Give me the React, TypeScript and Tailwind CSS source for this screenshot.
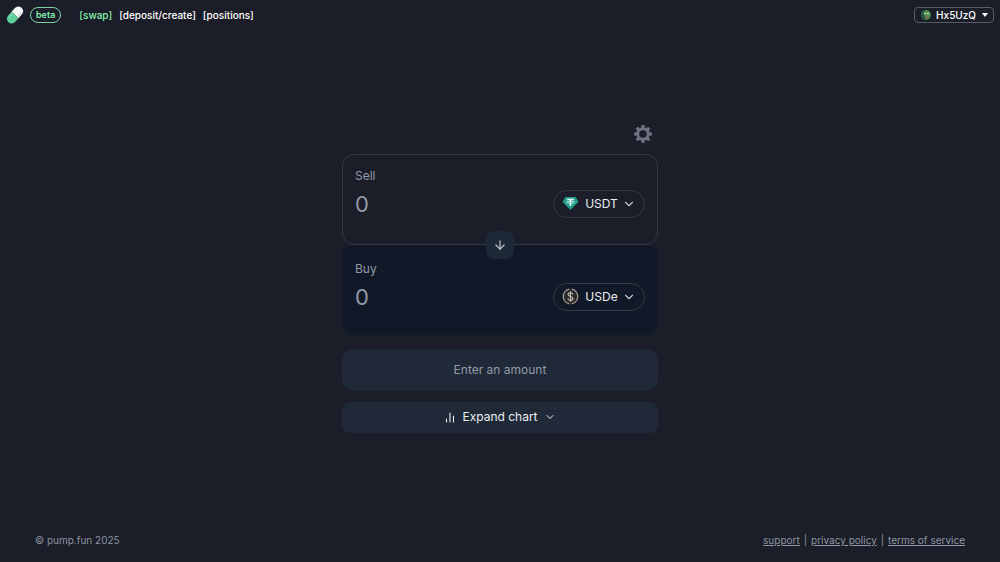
import React, { useState } from 'react';
import { ArrowDown, ChevronDown } from 'lucide-react';

function PillLogo() {
  return (
    <svg viewBox="0 0 20 20" className="w-5 h-5" aria-hidden="true">
      <g transform="rotate(42 10 10)">
        <path d="M5.3 10V4.9a4.7 4.7 0 0 1 9.4 0V10z" fill="#f4f7f6" />
        <path d="M5.3 10v5.1a4.7 4.7 0 0 0 9.4 0V10z" fill="#5fcf9a" />
        <path d="M12.8 5v3.2" stroke="#c9d6d2" strokeWidth="1" strokeLinecap="round" />
        <path d="M7.2 11.5v3" stroke="#a5ecc6" strokeWidth="1" strokeLinecap="round" />
      </g>
    </svg>
  );
}

function GearIcon() {
  return (
    <svg viewBox="0 0 20 20" className="w-5 h-5" aria-hidden="true">
      <circle cx="10" cy="10" r="5.2" fill="none" stroke="currentColor" strokeWidth="2.9" />
      {[0, 45, 90, 135, 180, 225, 270, 315].map((angle) => (
        <path key={angle} d="M8.1 4.6 8.5 1.1h3l.4 3.5z" fill="currentColor" transform={`rotate(${angle} 10 10)`} />
      ))}
    </svg>
  );
}

function TetherIcon() {
  return (
    <svg viewBox="0 0 18 18" className="w-[17px] h-[17px]" aria-hidden="true">
      <path d="M4.2 2h9.6a1 1 0 0 1 .9.5l2.4 4.2a1 1 0 0 1-.2 1.2l-7.2 7.3a1 1 0 0 1-1.4 0L1.1 7.9a1 1 0 0 1-.2-1.2l2.4-4.2a1 1 0 0 1 .9-.5z" fill="#1f9e8b" />
      <path d="M5.4 4.7h7.2M9 4.7v7" stroke="#e9f7f4" strokeWidth="1.6" />
      <ellipse cx="9" cy="7.7" rx="4.3" ry="1.1" fill="none" stroke="#e9f7f4" strokeWidth=".8" />
    </svg>
  );
}

function EthenaIcon() {
  return (
    <svg viewBox="0 0 18 18" className="w-[17px] h-[17px]" aria-hidden="true">
      <circle cx="9" cy="9" r="8.5" fill="#29292c" />
      <path d="M7.6 1.2a8 8 0 0 0 0 15.6M10.4 1.2a8 8 0 0 1 0 15.6" fill="none" stroke="#a39c92" strokeWidth="1.4" />
      <path d="M11.7 6.7C11.4 5.6 10.4 5 9 5 7.5 5 6.4 5.7 6.4 6.9c0 2.8 5.3 1.3 5.3 4.1 0 1.3-1.2 2-2.7 2s-2.6-.7-2.8-1.9M9 3.4v11.2" fill="none" stroke="#c9c0b3" strokeWidth="1.2" />
    </svg>
  );
}

function BarsIcon() {
  return (
    <svg viewBox="0 0 12 12" className="w-3 h-3" aria-hidden="true">
      <path d="M2.5 8v3M6 2v9M9.5 5v6" fill="none" stroke="currentColor" strokeWidth="1.1" strokeLinecap="round" />
    </svg>
  );
}

function Avatar() {
  return (
    <svg viewBox="0 0 12 12" className="w-3 h-3" aria-hidden="true">
      <circle cx="6" cy="6" r="5" fill="#4b8a50" />
      <path d="M1 6a5 5 0 0 1 4-4.9L4.5 6 6 11A5 5 0 0 1 1 6z" fill="#275a45" />
      <circle cx="5" cy="4.5" r="1" fill="#d7dfb4" />
      <circle cx="8" cy="4.5" r="1" fill="#d7dfb4" />
      <path d="M4.5 8h4" stroke="#a5564a" strokeWidth="1" />
    </svg>
  );
}

interface TokenPanelProps {
  id: string;
  label: string;
  token: string;
  icon: React.ReactNode;
  className: string;
}

function TokenPanel({ id, label, token, icon, className }: TokenPanelProps) {
  const [amount, setAmount] = useState('');

  return (
    <section className={`rounded-xl border px-3 ${className}`}>
      <label htmlFor={id} className="block text-xs leading-4 text-[#9299a8]">
        {label}
      </label>
      <div className="mt-1.5 flex items-center justify-between">
        <input
          id={id}
          inputMode="decimal"
          placeholder="0"
          value={amount}
          onChange={(e) => setAmount(e.target.value)}
          className="min-w-0 flex-1 bg-transparent text-[22px] leading-7 text-white placeholder:text-[#9299a8] outline-none"
        />
        <button type="button" className="flex h-7 w-[92px] items-center justify-center rounded-full border border-[#343945] text-xs text-[#eceef2]">
          {icon}
          <span className="ml-1.5 mr-1">{token}</span>
          <ChevronDown className="w-3.5 h-3.5 text-[#c3c7cf]" strokeWidth={2} />
        </button>
      </div>
    </section>
  );
}

export default function App() {
  return (
    <div className="flex min-h-screen flex-col bg-[#1b1d28] font-['Inter',sans-serif] text-white">
      <header className="flex h-[30px] items-center justify-between pl-[5px] pr-1.5">
        <div className="flex items-center">
          <a href="#home" aria-label="Home">
            <PillLogo />
          </a>
          <span className="ml-[5px] flex h-4 items-center rounded-full border border-[#7fcfa2] px-[5px] text-[9px] font-semibold text-[#86efac]">
            beta
          </span>
          <nav className="ml-[18px] flex gap-[7px] text-[10px] font-medium leading-4">
            <a href="#swap" className="text-[#86efac]">[swap]</a>
            <a href="#deposit">[deposit/create]</a>
            <a href="#positions">[positions]</a>
          </nav>
        </div>
        <button type="button" className="flex h-4 items-center rounded-sm border border-[#565b67] px-[5px] text-[10px] font-medium">
          <Avatar />
          <span className="ml-1 mr-1.5">Hx5UzQ</span>
          <svg viewBox="0 0 6 4" className="w-1.5 h-1" aria-hidden="true">
            <path d="M0 0h6L3 4z" fill="currentColor" />
          </svg>
        </button>
      </header>

      <main className="flex flex-1 flex-col items-center justify-center pt-2">
        <div className="flex w-full max-w-[316px] flex-col">
          <button type="button" aria-label="Settings" className="mb-2.5 mr-[5px] self-end text-[#6d727e]">
            <GearIcon />
          </button>

          <TokenPanel id="sell" label="Sell" token="USDT" icon={<TetherIcon />} className="h-[91px] border-[#363944] pt-[13px]" />
          <div className="relative">
            <button
              type="button"
              aria-label="Switch tokens"
              className="absolute -top-3.5 left-1/2 flex h-7 w-7 -translate-x-1/2 items-center justify-center rounded-lg bg-[#1e2937] text-[#c3c7cf]"
            >
              <ArrowDown className="w-3.5 h-3.5" strokeWidth={2} />
            </button>
          </div>
          <TokenPanel id="buy" label="Buy" token="USDe" icon={<EthenaIcon />} className="h-[90px] border-transparent bg-[#111827] pt-[15px]" />

          <button type="button" className="mt-3.5 h-[42px] rounded-xl bg-[#1f2937] text-xs text-[#9299a8]">
            Enter an amount
          </button>
          <button type="button" className="mt-[11px] flex h-[31px] items-center justify-center rounded-lg bg-[#1f2937] text-xs text-[#eceef2]">
            <BarsIcon />
            <span className="mx-1.5">Expand chart</span>
            <ChevronDown className="w-3 h-3" strokeWidth={2} />
          </button>
        </div>
      </main>

      <footer className="flex h-11 items-center justify-between px-[35px] text-[10px] leading-4 text-[#8e95a3]">
        <p>© pump.fun 2025</p>
        <nav className="flex gap-1">
          <a href="#support" className="underline">support</a>
          <span>|</span>
          <a href="#privacy" className="underline">privacy policy</a>
          <span>|</span>
          <a href="#terms" className="underline">terms of service</a>
        </nav>
      </footer>
    </div>
  );
}
